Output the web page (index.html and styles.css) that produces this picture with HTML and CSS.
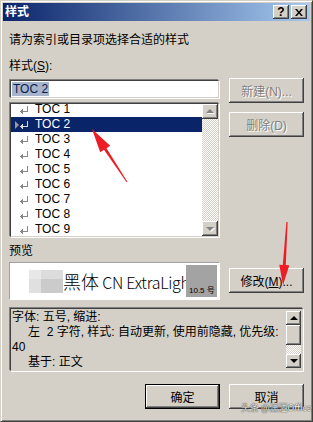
FILE: index.html
```html
<!DOCTYPE html>
<html lang="zh-CN">

<head>
    <meta charset="utf-8">
    <title>样式</title>
    <link rel="stylesheet" href="styles.css">
</head>

<body>
    <div class="window">
        <div class="titlebar">
            <span class="title">样式</span>
            <div class="caption-btns">
                <span class="cap-btn help">?</span>
                <span class="cap-btn">
                    <svg width="8" height="7" viewBox="0 0 8 7"><path d="M0 0h2l2 2.4L6 0h2L5 3.5 8 7H6L4 4.6 2 7H0l3-3.5z" /></svg>
                </span>
            </div>
        </div>

        <div class="content">
            <p class="prompt">请为索引或目录项选择合适的样式</p>
            <p class="label">样式(<u>S</u>):</p>

            <div class="style-row">
                <div class="style-col">
                    <div class="field sunken"><span class="field-sel">TOC 2</span></div>
                    <div class="listbox sunken">
                        <ul class="items">
                            <li><span class="ret"></span>TOC 1</li>
                            <li class="selected"><span class="marker"></span><span class="ret"></span>TOC 2</li>
                            <li><span class="ret"></span>TOC 3</li>
                            <li><span class="ret"></span>TOC 4</li>
                            <li><span class="ret"></span>TOC 5</li>
                            <li><span class="ret"></span>TOC 6</li>
                            <li><span class="ret"></span>TOC 7</li>
                            <li><span class="ret"></span>TOC 8</li>
                            <li><span class="ret"></span>TOC 9</li>
                        </ul>
                        <div class="vscroll">
                            <span class="sb-btn up off"></span>
                            <span class="sb-track"></span>
                            <span class="sb-btn down off"></span>
                        </div>
                    </div>
                </div>
                <div class="side-btns">
                    <button class="btn disabled">新建(N)...</button>
                    <button class="btn disabled">删除(D)</button>
                </div>
            </div>

            <p class="label preview-label">预览</p>

            <div class="preview-row">
                <div class="preview">
                    <div class="preview-text">
                        <span class="blur">
                            <i class="b1"></i><i class="b2"></i><i class="b3"></i><i class="b4"></i>
                        </span>
                        <span class="sample">黑体<span class="sample-latin"> CN ExtraLight</span></span>
                    </div>
                    <div class="preview-size">10.5 号</div>
                </div>
                <button class="btn modify">修改(<u>M</u>)...</button>
            </div>

            <div class="desc sunken">
                <div class="desc-text">
                    <div>字体: 五号, 缩进:</div>
                    <div class="indent">左&nbsp;&nbsp;2 字符, 样式: 自动更新, 使用前隐藏, 优先级:</div>
                    <div>40</div>
                    <div class="indent">基于: 正文</div>
                </div>
                <div class="vscroll desc-scroll">
                    <span class="sb-btn up"></span>
                    <span class="sb-thumb"></span>
                    <span class="sb-track"></span>
                    <span class="sb-btn down"></span>
                </div>
            </div>

            <div class="footer">
                <button class="btn default">确定</button>
                <button class="btn">取消</button>
            </div>
        </div>

        <svg class="arrows" width="313" height="422" viewBox="0 0 313 422">
            <polygon points="127.4,181.7 106.5,148.2 110.2,145.7 92,129 100.2,152.3 104,149.8 126.6,182.3" />
            <polygon points="287.6,222 285.8,265.1 289.3,265.3 283,285 279.3,264.7 282.8,264.9 286.4,222" />
        </svg>
        <span class="watermark">头条 @潇洒Office</span>
    </div>
</body>

</html>
```

FILE: styles.css
```css
:root {
    --face: #d4d0c8;
    --shadow: #808080;
    --dark: #404040;
    --hilite: #ffffff;
    --navy: #0a246a;
    --grey-text: #808080;
}

* {
    margin: 0;
    padding: 0;
    box-sizing: border-box;
}

body {
    font-family: "Liberation Sans", "Noto Sans CJK SC", sans-serif;
    font-size: 12px;
    color: #000;
    background: var(--face);
}

.window {
    position: relative;
    width: 313px;
    height: 422px;
    padding: 2px;
    display: flex;
    flex-direction: column;
    background: var(--face);
    border: 1px solid;
    border-color: var(--face) var(--dark) var(--dark) var(--face);
    box-shadow: inset 1px 1px var(--hilite), inset -1px -1px var(--shadow);
}

/* title bar */

.titlebar {
    height: 18px;
    padding: 0 3px 0 2px;
    display: flex;
    align-items: center;
    justify-content: space-between;
    background: linear-gradient(to right, #0a246a, #a6caf0);
}

.title {
    color: #fff;
    font-weight: bold;
    line-height: 18px;
}

.caption-btns {
    display: flex;
    gap: 2px;
}

.cap-btn {
    width: 16px;
    height: 14px;
    display: flex;
    align-items: center;
    justify-content: center;
    background: var(--face);
    box-shadow: inset -1px -1px var(--dark), inset 1px 1px var(--hilite), inset -2px -2px var(--shadow);
}

.cap-btn.help {
    font-weight: bold;
    font-size: 12px;
    line-height: 14px;
}

.cap-btn svg {
    fill: #000;
}

/* body */

.content {
    flex: 1;
    padding: 0 6px;
    display: flex;
    flex-direction: column;
}

.prompt {
    margin-top: 12px;
    line-height: 14px;
}

.label {
    margin-top: 12px;
    line-height: 14px;
}

.sunken {
    border: 1px solid;
    border-color: var(--dark) var(--face) var(--face) var(--dark);
    box-shadow: -1px -1px var(--shadow), 1px 1px var(--hilite);
}

.style-row {
    margin-top: 5px;
    display: flex;
    gap: 9px;
}

.style-col {
    width: 211px;
    display: flex;
    flex-direction: column;
}

.field {
    margin: 2px 1px 0;
    height: 18px;
    padding: 1px 1px;
    background: #fff;
    line-height: 14px;
}

.field-sel {
    display: inline-block;
    padding: 0 1px;
    background: #a6b4cc;
    color: #0a1a4a;
}

.listbox {
    margin: 5px 1px 1px;
    height: 134px;
    display: flex;
    overflow: hidden;
    background: #fff;
}

.items {
    flex: 1;
    list-style: none;
    margin-top: -2px;
}

.items li {
    position: relative;
    height: 15px;
    padding-left: 9px;
    display: flex;
    align-items: center;
    gap: 6px;
    line-height: 15px;
}

.items li.selected {
    background: var(--navy);
    color: #fff;
}

.ret {
    width: 9px;
    height: 8px;
    background:
        linear-gradient(#888, #888) 7px 0 / 1px 6px no-repeat,
        linear-gradient(#888, #888) 2px 5px / 6px 1px no-repeat,
        linear-gradient(#888, #888) 1px 4px / 1px 3px no-repeat,
        linear-gradient(#888, #888) 0 5px / 1px 1px no-repeat,
        linear-gradient(#888, #888) 2px 3px / 1px 5px no-repeat;
}

.selected .ret {
    filter: brightness(1.6);
}

.marker {
    position: absolute;
    left: 4px;
    top: 4px;
    border-left: 4px solid #9a9a9a;
    border-top: 4px solid transparent;
    border-bottom: 4px solid transparent;
}

.vscroll {
    width: 16px;
    display: flex;
    flex-direction: column;
}

.sb-btn {
    height: 15px;
    flex-shrink: 0;
    background: var(--face);
    box-shadow: inset -1px -1px var(--dark), inset 1px 1px var(--hilite), inset -2px -2px var(--shadow);
    display: flex;
    align-items: center;
    justify-content: center;
}

.sb-btn::after {
    content: "";
    border-left: 4px solid transparent;
    border-right: 4px solid transparent;
}

.sb-btn.up::after {
    border-bottom: 4px solid #000;
    margin-top: -1px;
}

.sb-btn.down::after {
    border-top: 4px solid #000;
}

.sb-btn.off::after {
    border-top-color: var(--grey-text);
    border-bottom-color: var(--grey-text);
    filter: drop-shadow(1px 1px 0 #fff);
}

.sb-track {
    flex: 1;
    background: repeating-conic-gradient(#fff 0 25%, var(--face) 0 50%) 0 0 / 2px 2px;
}

.sb-thumb {
    height: 20px;
    background: var(--face);
    box-shadow: inset -1px -1px var(--dark), inset 1px 1px var(--hilite), inset -2px -2px var(--shadow);
}

.side-btns {
    width: 75px;
    display: flex;
    flex-direction: column;
    gap: 9px;
}

.btn {
    font: inherit;
    height: 25px;
    width: 75px;
    border: none;
    background: var(--face);
    color: #000;
    box-shadow: inset -1px -1px var(--dark), inset 1px 1px var(--hilite), inset -2px -2px var(--shadow);
}

.btn.disabled {
    color: var(--grey-text);
    text-shadow: 1px 1px #fff;
}

.btn.default {
    box-shadow: inset 0 0 0 1px #000, inset -2px -2px var(--dark), inset 2px 2px var(--hilite), inset -3px -3px var(--shadow);
}

.preview-label {
    margin-top: 6px;
}

.preview-row {
    margin-top: 4px;
    display: flex;
    align-items: flex-start;
    gap: 9px;
}

.preview {
    width: 211px;
    height: 38px;
    padding: 2px;
    display: flex;
    background: #fff;
    border: 1px solid;
    border-color: #a0a0a0 #fff #fff #a0a0a0;
    box-shadow: 0 0 0 1px var(--face);
}

.preview-text {
    flex: 1;
    display: flex;
    align-items: center;
    overflow: hidden;
    white-space: nowrap;
}

.blur {
    margin-left: 17px;
    width: 34px;
    height: 23px;
    display: grid;
    grid-template-columns: 12px 22px;
    grid-template-rows: 9px 14px;
}

.b1 { background: #e8e8e8; }
.b2 { background: #dcdcdc; }
.b3 { background: #e0e0e0; }
.b4 { background: #cbcbcb; }

.sample {
    font-family: "Noto Sans CJK SC", sans-serif;
    font-size: 18px;
    font-weight: 300;
    line-height: 24px;
}

.sample-latin {
    font-size: 16px;
    letter-spacing: -0.3px;
}

.preview-size {
    width: 31px;
    background: #a3a3a3;
    font-size: 8px;
    line-height: 9px;
    padding: 0 0 2px 3px;
    display: flex;
    align-items: flex-end;
}

.modify {
    margin-top: 6px;
}

.desc {
    margin: 8px 1px 0;
    height: 63px;
    display: flex;
    background: var(--face);
}

.desc-text {
    flex: 1;
    padding: 1px 1px;
    line-height: 15px;
    white-space: nowrap;
}

.indent {
    padding-left: 16px;
}

.desc-scroll {
    padding: 2px 1px 2px 0;
}

.desc-scroll .sb-btn {
    height: 14px;
}

.footer {
    margin-top: 13px;
    display: flex;
    justify-content: flex-end;
    gap: 9px;
}

/* overlays */

.arrows {
    position: absolute;
    left: -1px;
    top: -1px;
    fill: #ee1c25;
    pointer-events: none;
}

.watermark {
    position: absolute;
    left: 240px;
    top: 401px;
    font-family: "Noto Sans CJK SC", sans-serif;
    font-size: 9px;
    line-height: 12px;
    color: #eee;
    text-shadow: 0 0 1px #333, 0 0 1px #333;
}
```
